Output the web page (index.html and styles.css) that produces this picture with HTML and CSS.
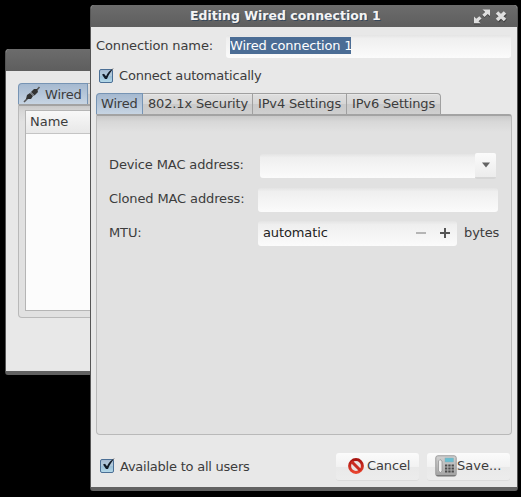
FILE: index.html
```html
<!DOCTYPE html>
<html lang="en">
<head>
<meta charset="utf-8">
<title>Editing Wired connection 1</title>
<link rel="stylesheet" href="styles.css">
</head>
<body>
<svg width="0" height="0" class="defs">
  <defs>
    <linearGradient id="boxfill" x1="0" y1="0" x2="0" y2="1"><stop offset="0" stop-color="#a5b9cf"/><stop offset=".45" stop-color="#b3cbdc"/><stop offset=".55" stop-color="#9dc0d8"/><stop offset="1" stop-color="#b5dbea"/></linearGradient>
    <linearGradient id="red" x1="0" y1="0" x2="0" y2="1"><stop offset="0" stop-color="#a81410"/><stop offset="1" stop-color="#e8432e"/></linearGradient>
    <linearGradient id="metal" x1="0" y1="0" x2="0" y2="1"><stop offset="0" stop-color="#d2d2d2"/><stop offset="1" stop-color="#a2a2a2"/></linearGradient>
    <symbol id="check" viewBox="0 0 16 16">
      <rect x=".5" y="1.5" width="13" height="13" rx="1.5" fill="url(#boxfill)" stroke="#4b6f95"/>
      <path d="M3 6.600 5 5.700 7 8.200C8.700 4.800 11 2 14.800 0 12 3.100 9.500 7 8 11H6Z" fill="#121c28"/>
    </symbol>
  </defs>
</svg>

<section class="window back">
  <header class="titlebar"></header>
  <div class="back-content">
    <div class="tabs">
      <div class="tab active back-tab">
        <svg width="18" height="17" viewBox="0 0 18 17"><path d="M1 16 5 12M13 5 16.500 1" stroke="#555" stroke-width="1.600"/><path d="M3 13 4 9 7 7 10 10 8 13Z" fill="#333"/><path d="M8 6 11 3 14 3 15 6 11.500 9.500Z" fill="#333"/><path d="M7.500 6.500 11 10" stroke="#777" stroke-width="1"/></svg>
        <span>Wired</span>
      </div>
      <div class="tab stub"></div>
    </div>
    <div class="pane back-pane">
      <div class="list"><div class="list-head">Name</div></div>
    </div>
  </div>
</section>

<section class="window front">
  <header class="titlebar">
    <h1>Editing Wired connection 1</h1>
    <svg class="controls" width="37" height="17" viewBox="0 0 37 17">
      <path d="M9.500 1.500H17V8.500L14.600 6.100 11.500 9 9.300 6.700 12.200 4ZM1 8.500 3.300 10.800 6.300 8.200 8.600 10.500 5.500 13.200 7.600 15.500H1Z" fill="#303030" transform="translate(0 1)" opacity=".6"/>
      <path d="M9.500 1.500H17V8L14.700 6 11.500 9 9.300 6.700 12.200 4ZM1 8.500 3.300 10.800 6.300 8.200 8.600 10.500 5.500 13.200 7.600 15.200H1Z" fill="#dedede"/>
      <path d="M24.500 5.500 32.500 13M32.500 5.500 24.500 13" stroke="#404040" stroke-width="4.200"/>
      <path d="M24 4.500 32 12M32 4.500 24 12" stroke="#dedede" stroke-width="3.600"/>
    </svg>
  </header>
  <div class="content">
    <div class="name-row">
      <label class="name-label">Connection name:</label>
      <div class="entry name-entry"><span class="selected">Wired connection 1</span></div>
    </div>
    <div class="check-row"><svg width="16" height="16"><use href="#check"/></svg><span>Connect automatically</span></div>
    <div class="tabs">
      <div class="tab active t1">Wired</div>
      <div class="tab t2">802.1x Security</div>
      <div class="tab t3">IPv4 Settings</div>
      <div class="tab t4">IPv6 Settings</div>
    </div>
    <div class="pane">
      <div class="field">
        <label>Device MAC address:</label>
        <div class="combo"><div class="entry"></div><div class="drop"><svg width="8" height="6"><path d="M0 .5H8L4 5.500Z" fill="#636363"/></svg></div></div>
      </div>
      <div class="field"><label>Cloned MAC address:</label><div class="entry mac"></div></div>
      <div class="field">
        <label>MTU:</label>
        <div class="entry spin"><span>automatic</span>
          <svg width="35" height="12"><path d="M0 6H10" stroke="#b5b5b5" stroke-width="2"/><path d="M24 6H34M29 1V11" stroke="#555" stroke-width="2"/></svg>
        </div>
        <span class="unit">bytes</span>
      </div>
    </div>
    <footer class="footer">
      <div class="check-row"><svg width="16" height="16"><use href="#check"/></svg><span>Available to all users</span></div>
      <div class="buttons">
        <div class="button cancel"><svg width="16" height="16" viewBox="0 0 16 16"><circle cx="8" cy="8" r="6.400" fill="#e9e3e2" stroke="url(#red)" stroke-width="3"/><path d="M3.500 3.500 12.500 12.500" stroke="#c92b20" stroke-width="3"/></svg><span>Cancel</span></div>
        <div class="button save"><svg width="22" height="22" viewBox="0 0 22 22">
          <rect x=".8" y=".8" width="20.400" height="20.400" rx="2" fill="url(#metal)" stroke="#999" stroke-width="1"/>
          <path d="M1.500 20.500H20.500" stroke="#777" stroke-width="1"/>
          <path d="M3.500 6 5 4.500 7 6V16L5.500 17.500 3.500 16Z" fill="#eee" stroke="#8d8d8d" stroke-width=".7"/>
          <rect x="10" y="3" width="8.500" height="4" fill="#66bfd2" stroke="#8cabb2" stroke-width=".5"/>
          <path d="M10 10.500H19M10 13.500H19M10 16.500H19" stroke="#4b4b4b" stroke-width="2" stroke-dasharray="2.300 1"/>
        </svg><span>Save...</span></div>
      </div>
    </footer>
  </div>
</section>
</body>
</html>
```
FILE: styles.css
```css
* { box-sizing: border-box; }
body {
  margin: 0;
  width: 521px;
  height: 497px;
  position: relative;
  overflow: hidden;
  background: #000;
  color: #3c3c3c;
  font: 13px/17px "DejaVu Sans", sans-serif;
  letter-spacing: -.12px;
  white-space: nowrap;
}
svg { display: block; flex: none; }
.defs { position: absolute; }
.window {
  position: absolute;
  background: #e8e8e8;
  border: 1px solid #555;
  border-top: 0;
  border-bottom: 4px solid #626262;
  border-radius: 4px 4px 3px 3px;
  overflow: hidden;
}
.back { left: 5px; top: 49px; width: 200px; height: 326px; }
.front { left: 90px; top: 5px; width: 428px; height: 486px; }
.titlebar {
  height: 22px;
  display: flex;
  align-items: center;
  background: linear-gradient(#6c6c6c, #5e5e5e);
}
.titlebar h1 {
  margin: 0 0 0 99px;
  width: 283px;
  font-size: 12.5px;
  letter-spacing: 0;
  line-height: 20px;
  color: #f4f4f4;
  text-shadow: 1px 1px 0 #37485b;
}
.content { padding: 8px 5px 0; }
.back-content { padding: 12px 0 0 12px; }
.name-row { display: flex; height: 23px; align-items: center; }
.name-label { width: 130px; padding-bottom: 2px; }
.entry {
  height: 24px;
  background: linear-gradient(#e4e4e4, #efefef 15%, #fbfbfb);
  border-radius: 3px;
}
.name-entry { width: 285px; height: 23px; padding: 2px 4px; }
.selected { display: inline-block; width: 121px; height: 17px; background: #4b6d95; color: #fff; letter-spacing: -.18px; }
.check-row { display: flex; align-items: center; }
.check-row span { margin-left: 4px; letter-spacing: -.19px; }
.content > .check-row { height: 17px; margin: 9px 0 9px 3px; }
.tabs { display: flex; }
.tab {
  height: 21px;
  padding: 1px 4px 0 5px;
  letter-spacing: -.16px;
  background: linear-gradient(#dfdfdf, #d6d6d6 48%, #c9c9c9 52%, #cfcfcf);
  border: 1px solid #a0a0a0;
  border-left: 0;
  border-bottom: 0;
  box-shadow: inset 0 1px #e6e6e6;
}
.tab.active {
  background: linear-gradient(#a5b9d0, #b5c6d9 50%, #c7d5e3);
  border: 1px solid #7694b4;
  border-bottom: 0;
  border-radius: 4px 0 0 0;
  box-shadow: none;
  padding-left: 4px;
}
.t1 { width: 47px; }
.t2 { width: 110px; }
.t3 { width: 94px; }
.t4 { width: 94px; border-radius: 0 4px 0 0; }
.pane {
  height: 321px;
  width: 416px;
  padding: 37px 0 0 12px;
  background: linear-gradient(#c9c9c9, #d8d8d8 6px, #e1e1e1 16px);
  border: 1px solid #b9b9b9;
  border-top: 2px solid #a3a3a3;
  border-radius: 0 3px 4px 4px;
}
.field { display: flex; align-items: center; height: 25px; margin-bottom: 9px; }
.field label { width: 149px; padding-bottom: 3px; }
.combo { display: flex; align-items: center; margin-left: 2px; }
.combo .entry { width: 215px; border-radius: 3px 0 0 3px; }
.drop {
  width: 21px;
  height: 26px;
  display: flex;
  align-items: center;
  justify-content: center;
  background: linear-gradient(#fbfbfb, #ececec);
  border-bottom: 2px solid #d6d6d6;
  border-radius: 2px;
}
.mac { width: 240px; }
.spin {
  width: 199px;
  height: 25px;
  padding: 0 6px 2px 5px;
  display: flex;
  align-items: center;
  justify-content: space-between;
  color: #222;
}
.unit { margin-left: 7px; padding-bottom: 3px; }
.footer { display: flex; justify-content: space-between; margin-top: 18px; padding-right: 2px; }
.footer .check-row { height: 27px; margin-left: 4px; }
.footer .check-row svg { margin-top: -2px; }
.footer .check-row span { letter-spacing: -.23px; }
.buttons { display: flex; gap: 8px; }
.button {
  width: 83px;
  height: 27px;
  display: flex;
  align-items: center;
  background: linear-gradient(#fbfbfb, #f2f2f2 50%, #e9e9e9 52%, #ececec);
  border-radius: 3px;
  box-shadow: 0 1px #dcdcdc;
}
.button span { padding-bottom: 2px; }
.button svg { margin-top: -1px; }
.cancel { padding-left: 12px; }
.cancel span { margin-left: 3px; }
.save { padding-left: 8px; }
.save span { letter-spacing: 0; }
.back-tab { width: 70px; display: flex; align-items: center; padding: 0 0 0 5px; }
.back-tab span { margin-left: 4px; }
.stub { width: 60px; }
.back-pane { width: 180px; height: 214px; padding: 4px 0 0 6px; }
.list { width: 170px; height: 201px; background: #fcfcfc; border: 1px solid #b5b5b5; }
.list-head { height: 23px; padding: 2px 4px; letter-spacing: 0; background: linear-gradient(#f8f8f8, #e8e8e8); border-bottom: 1px solid #c4c4c4; }
```
